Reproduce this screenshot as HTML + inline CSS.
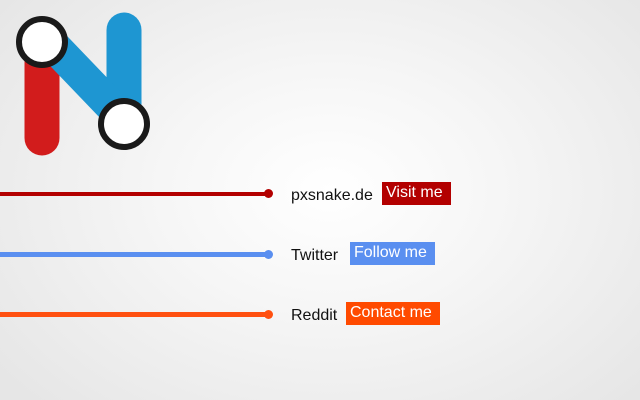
<!DOCTYPE html>
<html><head><style>
html,body{margin:0;padding:0}
body{width:640px;height:400px;overflow:hidden;position:relative;font-family:"Liberation Sans",sans-serif;
background:radial-gradient(ellipse 420px 300px at 330px 190px,#ffffff 0%,#f6f6f6 40%,#e6e6e6 100%);}
.line{position:absolute;left:0;height:4px}
.dot{position:absolute;width:9px;height:9px;border-radius:50%}
.lbl{position:absolute;font-size:16px;color:#111}
.btn{position:absolute;color:#fff;font-size:16px;height:23px;line-height:22px;padding:0 4px;box-sizing:border-box;white-space:nowrap}
</style></head><body>
<svg width="160" height="165" style="position:absolute;left:0;top:0">
<line x1="42" y1="60" x2="42" y2="138" stroke="#d21c1c" stroke-width="35" stroke-linecap="round"/>
<line x1="124" y1="30" x2="124" y2="110" stroke="#1e96d2" stroke-width="35" stroke-linecap="round"/>
<line x1="50" y1="42" x2="120" y2="115" stroke="#1e96d2" stroke-width="33"/>
<circle cx="42" cy="42" r="23" fill="#fff" stroke="#1a1a1a" stroke-width="6"/>
<circle cx="124" cy="124" r="23" fill="#fff" stroke="#1a1a1a" stroke-width="6"/>
</svg>
<div class="line" style="top:192px;width:268px;background:#b30000;height:4px"></div>
<div class="dot" style="left:264px;top:189px;background:#b30000"></div>
<div class="lbl" style="left:291px;top:187px">pxsnake.de</div>
<div class="btn" style="left:382px;top:182px;width:69px;background:#b30000">Visit me</div>

<div class="line" style="top:252px;width:268px;background:#5a8ff0;height:5px"></div>
<div class="dot" style="left:264px;top:250px;background:#5a8ff0"></div>
<div class="lbl" style="left:291px;top:247px">Twitter</div>
<div class="btn" style="left:350px;top:242px;width:85px;background:#5a8ff0">Follow me</div>

<div class="line" style="top:312px;width:268px;background:#ff5010;height:5px"></div>
<div class="dot" style="left:264px;top:310px;background:#ff5010"></div>
<div class="lbl" style="left:291px;top:307px">Reddit</div>
<div class="btn" style="left:346px;top:302px;width:94px;background:#ff4a00">Contact me</div>
</body></html>
